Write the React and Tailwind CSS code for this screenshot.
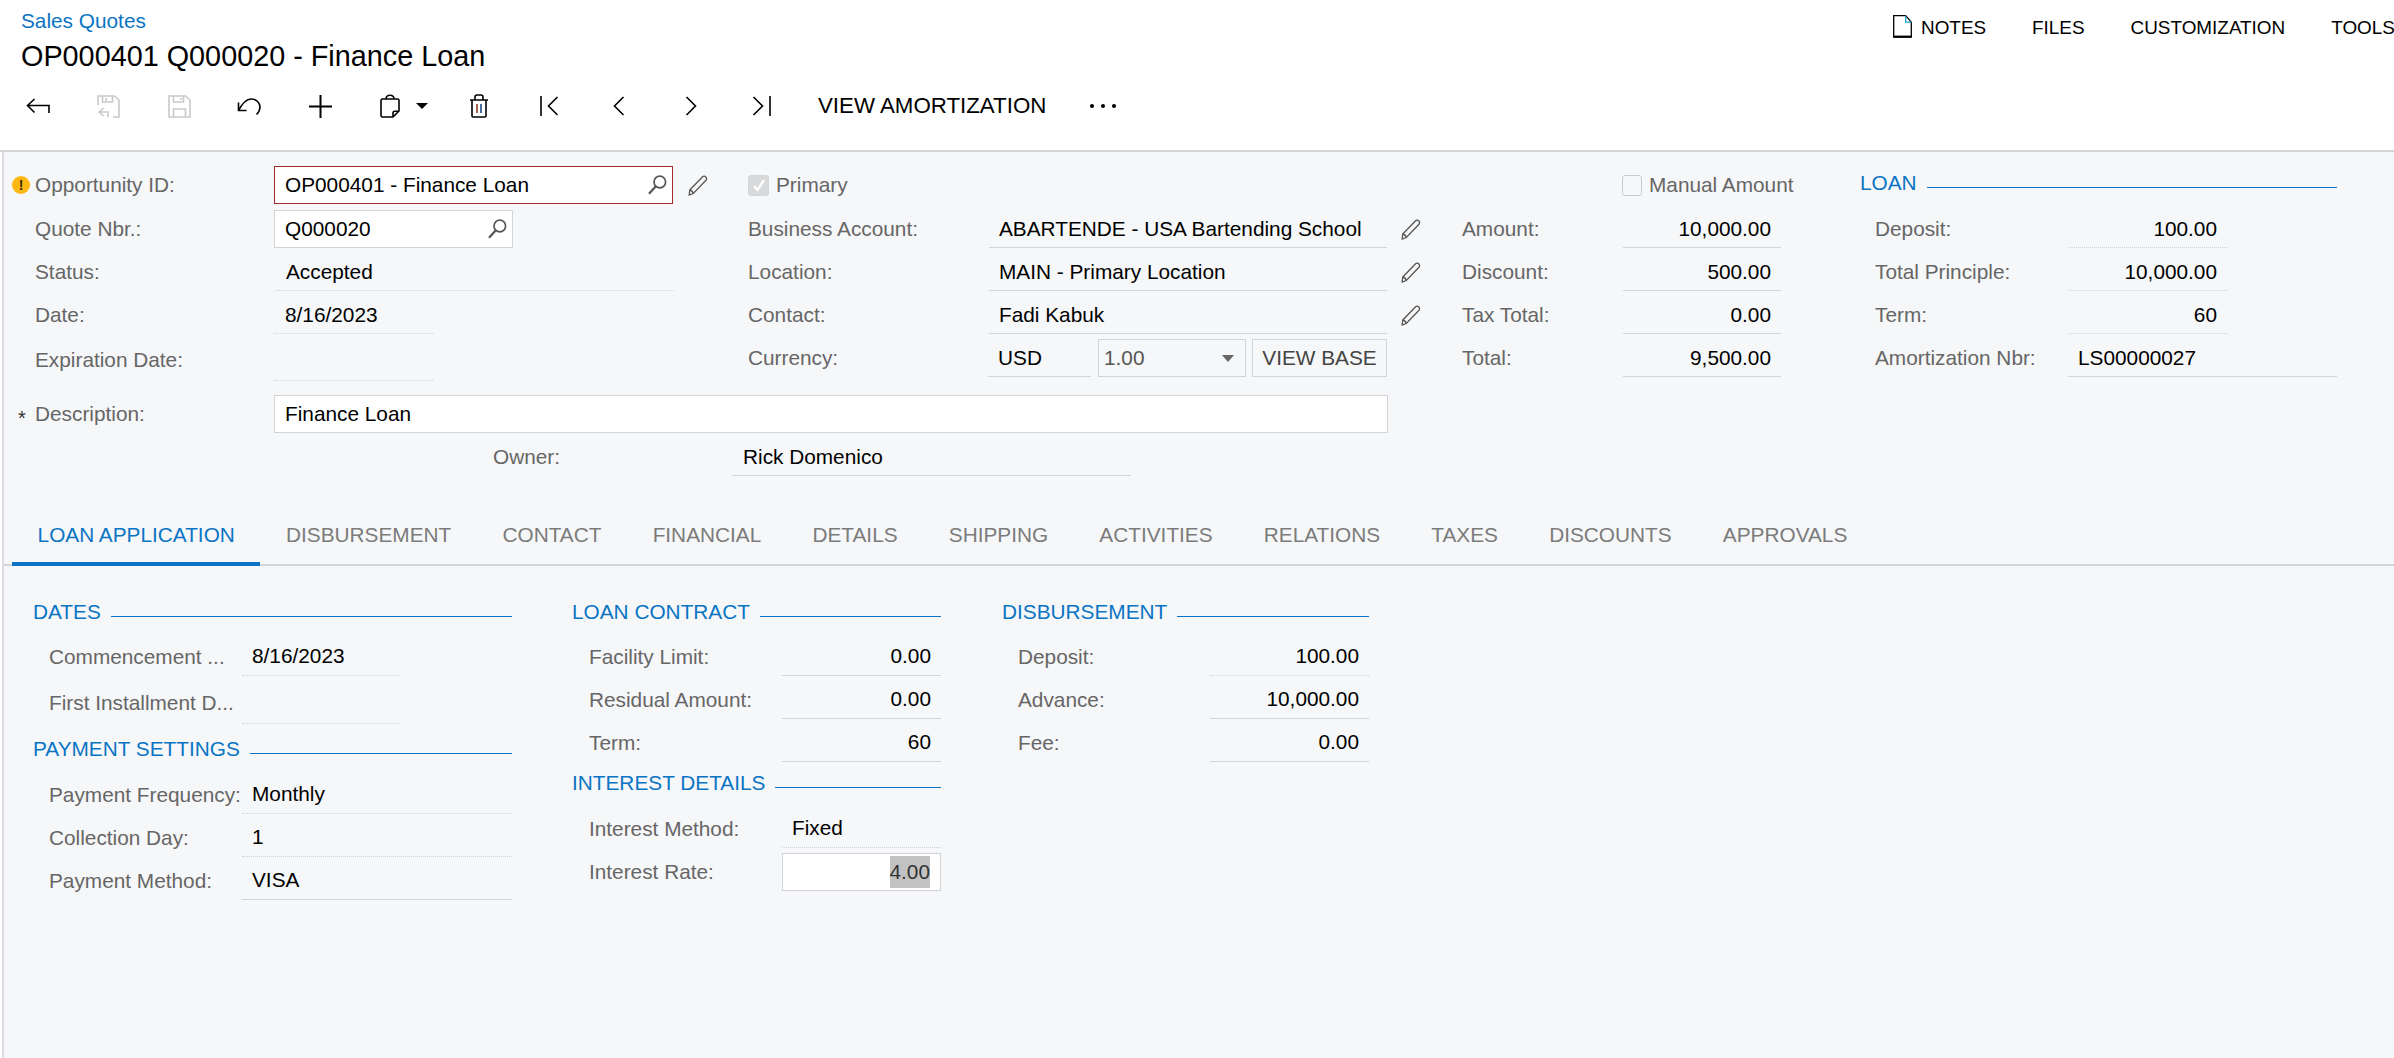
import React from "react";

const tabs = [
  "LOAN APPLICATION",
  "DISBURSEMENT",
  "CONTACT",
  "FINANCIAL",
  "DETAILS",
  "SHIPPING",
  "ACTIVITIES",
  "RELATIONS",
  "TAXES",
  "DISCOUNTS",
  "APPROVALS",
];

function Svg({ w, h, children, color = "#000", sw = 1.6 }) {
  return (
    <svg width={w} height={h} viewBox={`0 0 ${w} ${h}`} fill="none" stroke={color} strokeWidth={sw} className="shrink-0">
      {children}
    </svg>
  );
}

const Pencil = () => (
  <Svg w={21} h={21} color="#555" sw={1.3}>
    <path d="M1.800 15 14.600 1.800c.9-.9 2.200-.8 3.200.2s1.100 2.300.2 3.200L5.300 18.500 1.200 20z" />
    <path d="M1.800 15c1.500.2 3 1.700 3.500 3.500" />
  </Svg>
);

const Search = () => (
  <Svg w={19} h={20} color="#555" sw={1.7}>
    <circle cx="11.800" cy="7" r="5.800" />
    <path d="M7.600 11.400 1 18.800" strokeWidth="2.200" />
  </Svg>
);

const Warning = () => (
  <div className="w-[18px] h-[18px] rounded-full bg-[#fdb813] flex items-center justify-center text-[14px] leading-none font-bold text-[#3a2c00]">
    !
  </div>
);

function Note() {
  return (
    <Svg w={19} h={23} sw={1.3}>
      <path d="M.7.7h12l5.600 6.500v15H.7z" />
      <path d="M12.700.7v6.500h5.600" stroke="#1aa6c9" />
      <path d="M.7 21.600h17.600" strokeWidth="2" />
    </Svg>
  );
}

function Field({ label, width, value, right, kind = "solid", height = "h-[39px]" }) {
  const boxClass =
    kind === "input"
      ? "bg-white border border-[#d2d4d7]"
      : kind === "dotted"
        ? "border-b border-dotted border-[#cfd1d4]"
        : "border-b border-[#d2d4d7]";
  return (
    <div className="flex items-center">
      <div className="flex-1 min-w-0 whitespace-nowrap text-[#666]">{label}</div>
      <div
        className={`${width} ${height} ${boxClass} ${right ? "justify-end pr-[10px]" : "pl-[10px]"} shrink-0 flex items-center text-black whitespace-nowrap`}
      >
        {value}
      </div>
    </div>
  );
}

function Section({ title }) {
  return (
    <div className="flex h-[24px] items-center gap-[10px] text-[#0a74c4]">
      <span className="whitespace-nowrap">{title}</span>
      <div className="flex-1 h-[1.5px] mt-[9px] bg-[#0a74c4]" />
    </div>
  );
}

function ToolButton({ className = "w-[70.5px]", children }) {
  return <div className={`${className} h-[40px] flex items-center justify-center shrink-0`}>{children}</div>;
}

function Toolbar() {
  return (
    <div className="flex items-center pl-[3px] mt-[13px] h-[40px]">
      <ToolButton>
        <Svg w={24} h={17}>
          <path d="M8.500 1 1.500 7.500l7 7M1.500 7.500h21.500V15" />
        </Svg>
      </ToolButton>
      <ToolButton>
        <Svg w={23} h={23} color="#c9c9c9">
          <path d="M1 10V1h16.500L22 5v17h-6M5.500 1v6h10V1M9 6V3" />
          <path d="M7 13l-5 4 5 4M2 17h9v5" />
        </Svg>
      </ToolButton>
      <ToolButton>
        <Svg w={23} h={23} color="#c9c9c9">
          <path d="M1 1h16.500L22 5v17H1zM5.500 1v6h10V1M5.500 22v-8h12v8M13 3v2" />
        </Svg>
      </ToolButton>
      <ToolButton>
        <Svg w={25} h={19}>
          <path d="M1.500 5.500v8h8M1.500 13.500C5 7 9 2 14 2c5.500 0 9 4 9 8 0 3-1.500 5.500-3.500 7.500" />
        </Svg>
      </ToolButton>
      <ToolButton>
        <Svg w={23} h={23} sw={2}>
          <path d="M0 11.500h23M11.500 0v23" />
        </Svg>
      </ToolButton>
      <ToolButton className="w-[88.5px] pl-[8px] gap-[16px]">
        <Svg w={20} h={24}>
          <path d="M2.500 5h15c.8 0 1.500.7 1.500 1.500V17l-6 6H2.500C1.700 23 1 22.300 1 21.500v-15C1 5.700 1.700 5 2.500 5zM6 5c0-5 8-5 8 0M13 23v-4c0-1 .7-1.800 1.800-1.800H19" />
        </Svg>
        <div className="w-0 h-0 border-l-[6px] border-r-[6px] border-t-[6px] border-l-transparent border-r-transparent border-t-black" />
      </ToolButton>
      <ToolButton>
        <Svg w={20} h={24}>
          <path d="M1 6h18M3 6v16c0 .6.400 1 1 1h12c.6 0 1-.4 1-1V6M6 6V3c0-1 1-2 2-2h4c1 0 2 1 2 2v3" />
          <path d="M8 10v9" stroke="#8a3a1a" />
          <path d="M12 10v9" stroke="#1a4a8a" />
        </Svg>
      </ToolButton>
      <ToolButton>
        <Svg w={19} h={20}>
          <path d="M1 0v20M17.500 1 8.500 10l9 9" />
        </Svg>
      </ToolButton>
      <ToolButton className="w-[68px]">
        <Svg w={12} h={20}>
          <path d="M10.500 1 1.500 10l9 9" />
        </Svg>
      </ToolButton>
      <ToolButton className="w-[75.5px]">
        <Svg w={12} h={20}>
          <path d="M1.500 1l9 9-9 9" />
        </Svg>
      </ToolButton>
      <ToolButton className="w-[65px]">
        <Svg w={19} h={20}>
          <path d="M18 0v20M1.500 1l9 9-9 9" />
        </Svg>
      </ToolButton>
      <div className="pl-[24.5px] pr-[22px] text-[22.3px] whitespace-nowrap">VIEW AMORTIZATION</div>
      <div className="w-[70px] flex justify-center gap-[7px]">
        <div className="w-[4px] h-[4px] rounded-full bg-black" />
        <div className="w-[4px] h-[4px] rounded-full bg-black" />
        <div className="w-[4px] h-[4px] rounded-full bg-black" />
      </div>
    </div>
  );
}

function Header() {
  return (
    <div className="h-[152px] shrink-0 border-b-2 border-[#d2d4d7] bg-white flex overflow-hidden">
      <div className="w-[1893px] shrink-0">
        <div className="pl-[21px] pt-[8px] text-[#0a74c4] leading-[26px]">Sales Quotes</div>
        <div className="pl-[21px] mt-[5px] text-[28.8px] leading-[34px]">OP000401 Q000020 - Finance Loan</div>
        <Toolbar />
      </div>
      <div className="flex items-start gap-[46px] pt-[15px] text-[18.9px] whitespace-nowrap">
        <div className="flex items-start gap-[9px]">
          <Note />
          <span className="leading-[26px]">NOTES</span>
        </div>
        <span className="leading-[26px]">FILES</span>
        <span className="leading-[26px]">CUSTOMIZATION</span>
        <span className="leading-[26px]">TOOLS</span>
      </div>
    </div>
  );
}

function TopForm() {
  return (
    <div className="pt-[14px]">
      <div className="flex">
        {/* left column */}
        <div className="w-[744px] shrink-0">
          <div className="flex h-[44px] items-start">
            <div className="w-[31px] pl-[8px] h-[38px] flex items-center">
              <Warning />
            </div>
            <div className="w-[239px] h-[38px] flex items-center text-[#666]">Opportunity ID:</div>
            <div className="w-[399px] h-[38px] bg-white border border-[#a52a2a] pl-[10px] pr-[5px] flex items-center justify-between">
              OP000401 - Finance Loan
              <Search />
            </div>
            <div className="ml-[15px] h-[38px] flex items-center">
              <Pencil />
            </div>
          </div>
          <div className="pl-[31px] w-[670px] h-[43px]">
            <div className="flex h-[38px] items-center">
              <div className="w-[239px] text-[#666]">Quote Nbr.:</div>
              <div className="w-[239px] h-[38px] bg-white border border-[#d2d4d7] pl-[10px] pr-[5px] flex items-center justify-between">
                Q000020
                <Search />
              </div>
            </div>
          </div>
          <div className="pl-[31px] w-[670px] h-[43px]">
            <Field label="Status:" width="w-[399px]" value={<span className="pl-px">Accepted</span>} kind="dotted" height="h-[38px]" />
          </div>
          <div className="pl-[31px] w-[429px] h-[43px]">
            <Field label="Date:" width="w-[159px]" value={<span className="pl-px">8/16/2023</span>} kind="dotted" height="h-[38px]" />
          </div>
          <div className="pl-[31px] w-[429px] h-[56px]">
            <Field label="Expiration Date:" width="w-[159px]" value="" kind="dotted" height="h-[42px]" />
          </div>
        </div>

        {/* middle column */}
        <div className="w-[714px] shrink-0">
          <div className="h-[44px] flex items-start">
            <div className="h-[38px] flex items-center gap-[7px] text-[#666]">
              <div className="w-[21px] h-[21px] rounded-[3px] bg-[#d8d9db] border border-[#d2d4d7] flex items-center justify-center">
                <Svg w={14} h={14} color="#fff" sw={2.4}>
                  <path d="M2 8l3.500 4L12 2" />
                </Svg>
              </div>
              Primary
            </div>
          </div>
          {[
            ["Business Account:", "ABARTENDE - USA Bartending School"],
            ["Location:", "MAIN - Primary Location"],
            ["Contact:", "Fadi Kabuk"],
          ].map(([label, value]) => (
            <div key={label} className="flex items-start h-[43px]">
              <div className="w-[639px] shrink-0">
                <Field label={label} width="w-[398px]" value={value} height="h-[38px]" />
              </div>
              <div className="ml-[14px] h-[38px] flex items-center">
                <Pencil />
              </div>
            </div>
          ))}
          <div className="flex items-center w-[640px] h-[38px]">
            <div className="w-[240px] text-[#666]">Currency:</div>
            <div className="w-[103px] h-[38px] border-b border-[#d2d4d7] pl-[10px] flex items-center">USD</div>
            <div className="ml-[7px] w-[148px] h-[38px] border border-[#d2d4d7] pl-[5px] pr-[11px] flex items-center justify-between text-[#555]">
              1.00
              <div className="w-0 h-0 border-l-[6px] border-r-[6px] border-t-[7px] border-l-transparent border-r-transparent border-t-[#666]" />
            </div>
            <div className="ml-[6px] w-[135px] h-[38px] border border-[#d2d4d7] flex items-center justify-center text-[#444]">
              VIEW BASE
            </div>
          </div>
        </div>

        {/* totals column */}
        <div className="w-[398px] shrink-0">
          <div className="h-[44px] flex items-start pl-[160px]">
            <div className="h-[38px] flex items-center gap-[7px] text-[#666] whitespace-nowrap">
              <div className="w-[20px] h-[21px] rounded-[3px] bg-[#f6f7f9] border border-[#c8cacd]" />
              Manual Amount
            </div>
          </div>
          <div className="w-[319px] flex flex-col gap-[5px]">
            <Field label="Amount:" width="w-[158px]" value="10,000.00" right height="h-[38px]" />
            <Field label="Discount:" width="w-[158px]" value="500.00" right height="h-[38px]" />
            <Field label="Tax Total:" width="w-[158px]" value="0.00" right height="h-[38px]" />
            <Field label="Total:" width="w-[158px]" value="9,500.00" right height="h-[38px]" />
          </div>
        </div>

        {/* loan column */}
        <div className="w-[477px] shrink-0">
          <div className="h-[44px] pt-[5px]">
            <Section title="LOAN" />
          </div>
          <div className="pl-[15px] flex flex-col gap-[5px]">
            <div className="w-[352px] flex flex-col gap-[5px]">
              <Field label="Deposit:" width="w-[159px]" value="100.00" right kind="dotted" height="h-[38px]" />
              <Field label="Total Principle:" width="w-[159px]" value="10,000.00" right kind="dotted" height="h-[38px]" />
              <Field label="Term:" width="w-[159px]" value="60" right kind="dotted" height="h-[38px]" />
            </div>
            <div className="w-[462px]">
              <Field label="Amortization Nbr:" width="w-[269px]" value="LS00000027" height="h-[38px]" />
            </div>
          </div>
        </div>
      </div>

      <div className="flex items-center h-[38px]">
        <div className="w-[31px] pl-[14px] pt-[7px] text-[#333] text-[20px] leading-none">*</div>
        <div className="w-[239px] text-[#666]">Description:</div>
        <div className="w-[1114px] h-[38px] bg-white border border-[#d2d4d7] pl-[10px] flex items-center">Finance Loan</div>
      </div>
      <div className="mt-[5px] ml-[489px] w-[638px]">
        <Field label="Owner:" width="w-[399px]" value={<span className="pl-px">Rick Domenico</span>} height="h-[38px]" />
      </div>
    </div>
  );
}

function Tabs() {
  return (
    <div className="mt-[29px] h-[61px] pl-[8px] flex border-b-2 border-[#d2d4d7] text-[#7b7b7b]">
      {tabs.map((tab, i) => (
        <div
          key={tab}
          className={`px-[25.6px] h-[61px] shrink-0 flex items-center whitespace-nowrap ${
            i === 0 ? "pt-[2px] text-[#0a74c4] border-b-4 border-[#0a74c4]" : "pb-[2px]"
          }`}
        >
          {tab}
        </div>
      ))}
    </div>
  );
}

function LoanApplication() {
  return (
    <div className="flex pt-[34px] pl-[29px]">
      <div className="w-[479px] shrink-0">
        <Section title="DATES" />
        <div className="mt-[13px] pl-[16px] w-[367px] flex flex-col gap-[5px]">
          <Field label="Commencement ..." width="w-[158px]" value="8/16/2023" kind="dotted" />
          <Field label="First Installment D..." width="w-[158px]" value="" kind="dotted" height="h-[43px]" />
        </div>
        <div className="mt-[13px]">
          <Section title="PAYMENT SETTINGS" />
        </div>
        <div className="mt-[14px] pl-[16px] flex flex-col gap-[4px]">
          <Field label="Payment Frequency:" width="w-[270px]" value="Monthly" kind="dotted" />
          <Field label="Collection Day:" width="w-[270px]" value="1" kind="dotted" />
          <Field label="Payment Method:" width="w-[270px]" value="VISA" />
        </div>
      </div>

      <div className="ml-[60px] w-[369px] shrink-0">
        <Section title="LOAN CONTRACT" />
        <div className="mt-[13px] pl-[17px] flex flex-col gap-[4px]">
          <Field label="Facility Limit:" width="w-[159px]" value="0.00" right />
          <Field label="Residual Amount:" width="w-[159px]" value="0.00" right />
          <Field label="Term:" width="w-[159px]" value="60" right />
        </div>
        <div className="mt-[9px]">
          <Section title="INTEREST DETAILS" />
        </div>
        <div className="mt-[14px] pl-[17px] flex flex-col gap-[5px]">
          <Field label="Interest Method:" width="w-[159px]" value="Fixed" kind="dotted" />
          <Field
            label="Interest Rate:"
            width="w-[159px]"
            value={<span className="bg-[#c2c2c2] text-[#333]">4.00</span>}
            right
            kind="input"
            height="h-[38px]"
          />
        </div>
      </div>

      <div className="ml-[61px] w-[367px] shrink-0">
        <Section title="DISBURSEMENT" />
        <div className="mt-[13px] pl-[16px] flex flex-col gap-[4px]">
          <Field label="Deposit:" width="w-[159px]" value="100.00" right kind="dotted" />
          <Field label="Advance:" width="w-[159px]" value="10,000.00" right />
          <Field label="Fee:" width="w-[159px]" value="0.00" right />
        </div>
      </div>
    </div>
  );
}

export default function App() {
  return (
    <div className="w-[2394px] h-[1058px] overflow-hidden flex flex-col bg-white font-['Liberation_Sans',Arial,sans-serif] text-[20.8px] text-black">
      <Header />
      <div className="flex-1 ml-[2px] border-l-2 border-[#dcdde0] bg-[#f6f7f9]">
        <TopForm />
        <Tabs />
        <LoanApplication />
      </div>
    </div>
  );
}
